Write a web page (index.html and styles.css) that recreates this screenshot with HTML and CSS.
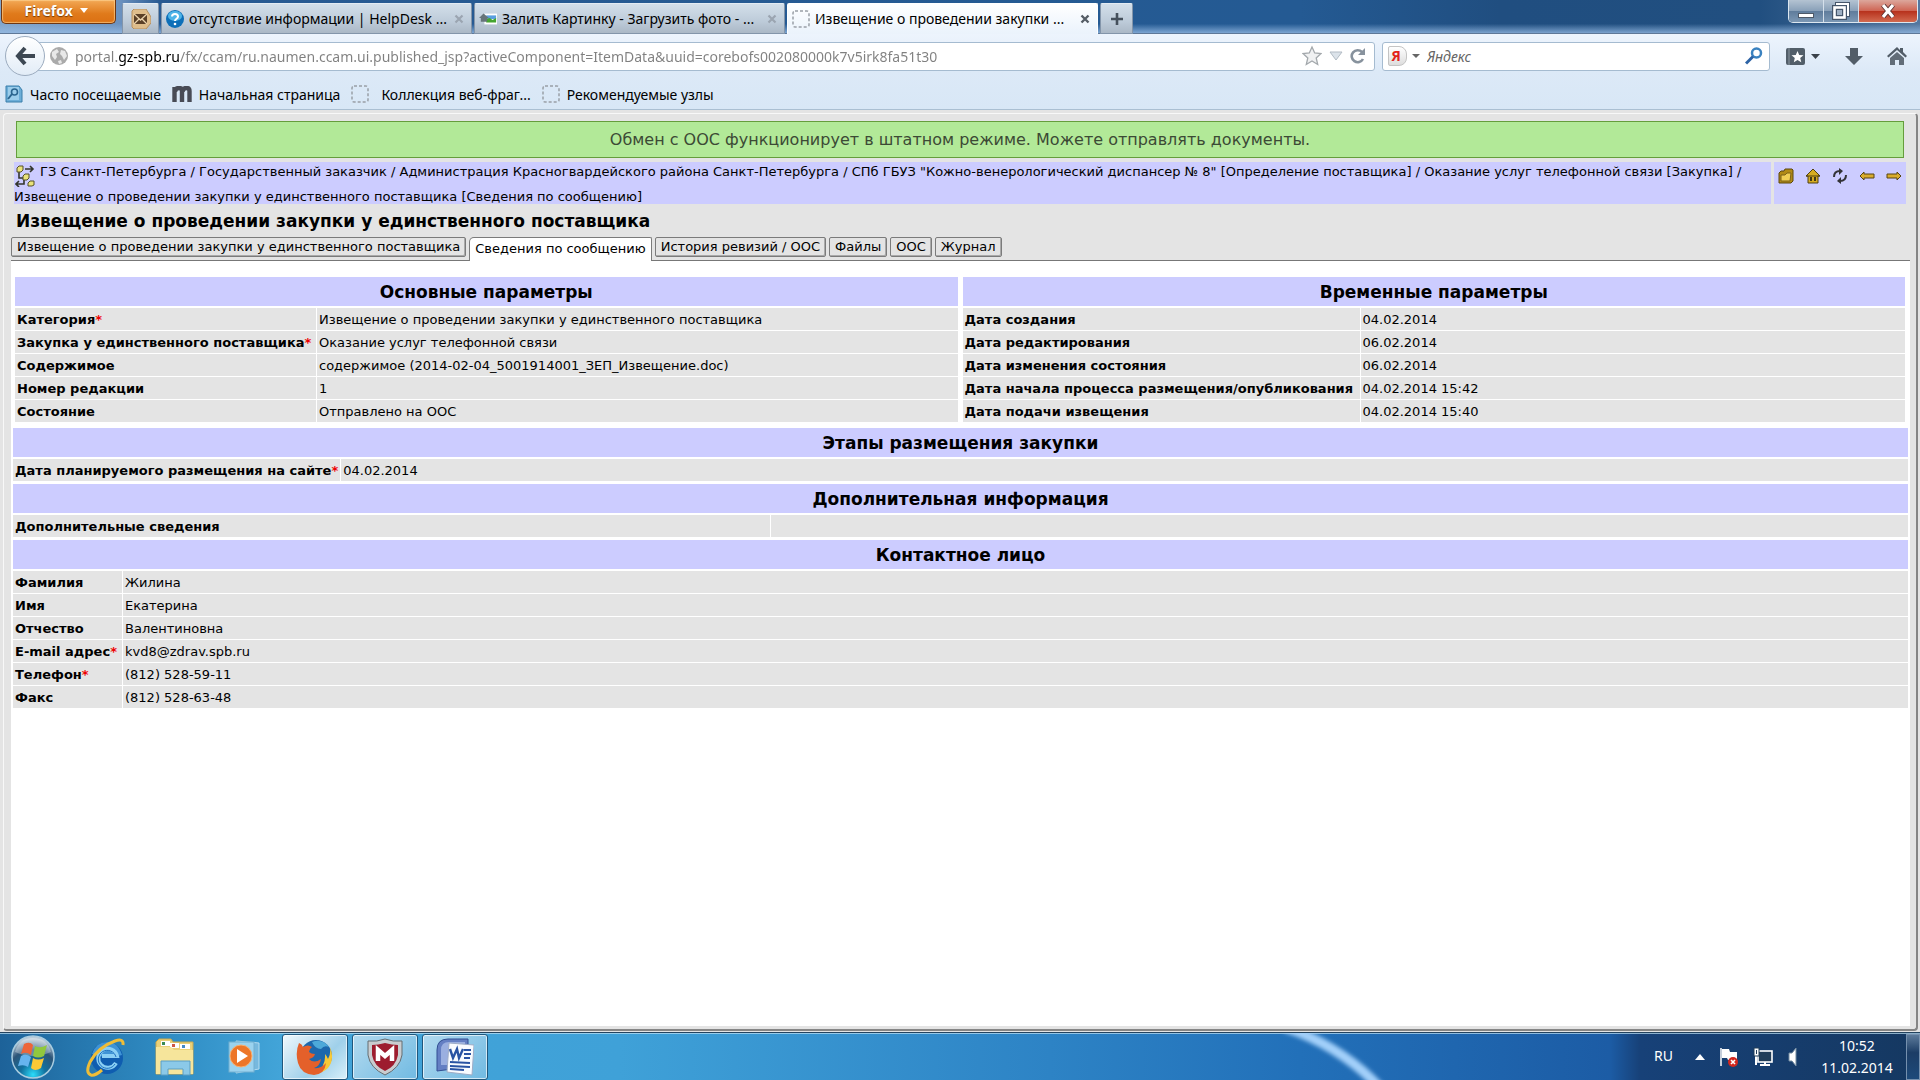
FILE: index.html
```html
<!DOCTYPE html>
<html lang="ru">
  <head>
    <meta charset="UTF-8" />
    <meta name="viewport" content="width=device-width, initial-scale=1.0" />
    <title>Извещение о проведении закупки у единственного поставщика</title>
    <link rel="stylesheet" href="styles.css">
  </head>
  <body>
    <!-- Заголовок окна и вкладки -->
    <header class="titlebar">
      <button class="firefox-btn">Firefox <span class="caret"></span></button>
      <div class="browser-tabs">
        <button class="browser-tab pinned" aria-label="Почта">
          <svg width="20" height="20" viewBox="0 0 20 20"><path d="M1 2l2-2h12l5 8v6l-5 6H3l-2-2z" fill="#dfbd8b" stroke="#b58f60"/><rect x="3" y="5" width="13" height="10" fill="#5b4027"/><path d="M3 5l6.500 6L16 5M3 15l5-5M16 15l-5-5" fill="none" stroke="#ead2ac" stroke-width="1.300"/></svg>
        </button>
        <div class="browser-tab">
          <svg width="18" height="18" viewBox="0 0 18 18"><circle cx="9" cy="9" r="9" fill="#0d6fb8"/><ellipse cx="9" cy="6" rx="7" ry="5" fill="#4db4e8"/><path d="M6 6.500C6 3 12 3 12 6.500 12 9 9 8.500 9 11" fill="none" stroke="#fff" stroke-width="2"/><circle cx="9" cy="14" r="1.300" fill="#fff"/></svg>
          <span class="tab-title">отсутствие информации | HelpDesk ...</span>
          <button class="tab-close" aria-label="Закрыть"><svg width="10" height="10" viewBox="0 0 10 10"><path d="M1.500 1.500l7 7M8.500 1.500l-7 7" stroke="#9ba5b1" stroke-width="2.200"/></svg></button>
        </div>
        <div class="browser-tab">
          <svg width="18" height="18" viewBox="0 0 20 18"><rect x="6" y="3" width="14" height="12" fill="#fff"/><rect x="8" y="5" width="11" height="4" fill="#5a9fe0"/><path d="M8 13V9l4-1 3 2 4-2v5z" fill="#45a52f"/><path d="M0 8l5-5 6 5H9v4H2V8z" fill="#667479"/></svg>
          <span class="tab-title">Залить Картинку - Загрузить фото - ...</span>
          <button class="tab-close" aria-label="Закрыть"><svg width="10" height="10" viewBox="0 0 10 10"><path d="M1.500 1.500l7 7M8.500 1.500l-7 7" stroke="#9ba5b1" stroke-width="2.200"/></svg></button>
        </div>
        <div class="browser-tab active">
          <svg width="18" height="18" viewBox="0 0 18 18"><rect x="1" y="1" width="16" height="16" rx="2" fill="none" stroke="#999fa6" stroke-width="1.500" stroke-dasharray="3 2"/></svg>
          <span class="tab-title">Извещение о проведении закупки ...</span>
          <button class="tab-close" aria-label="Закрыть"><svg width="10" height="10" viewBox="0 0 10 10"><path d="M1.500 1.500l7 7M8.500 1.500l-7 7" stroke="#555d66" stroke-width="2.400"/></svg></button>
        </div>
        <button class="browser-tab new-tab" aria-label="Новая вкладка">
          <svg width="14" height="14" viewBox="0 0 14 14"><path d="M7 1v12M1 7h12" stroke="#45505c" stroke-width="2.600"/></svg>
        </button>
      </div>
      <div class="window-buttons">
        <button class="win-btn" aria-label="Свернуть"><svg width="16" height="16" viewBox="0 0 16 16"><rect x="0.500" y="10.500" width="15" height="4" fill="#fff" stroke="#4d5968"/></svg></button>
        <button class="win-btn" aria-label="Развернуть"><svg width="18" height="18" viewBox="0 0 18 18"><rect x="5" y="2" width="11" height="11" fill="none" stroke="#46566a" stroke-width="4"/><rect x="5" y="2" width="11" height="11" fill="none" stroke="#fff" stroke-width="2"/><rect x="2.500" y="5.500" width="10" height="10" fill="#9eafc2" stroke="#46566a" stroke-width="5"/><rect x="2.500" y="5.500" width="10" height="10" fill="none" stroke="#fff" stroke-width="2.600"/></svg></button>
        <button class="win-btn win-close" aria-label="Закрыть окно"><svg width="16" height="14" viewBox="0 0 16 14"><path d="M3 1l10 12M13 1L3 13" stroke="#5e3433" stroke-width="5"/><path d="M3 1l10 12M13 1L3 13" stroke="#fff" stroke-width="3.200"/></svg></button>
      </div>
    </header>

    <!-- Панель навигации -->
    <nav class="navbar">
      <div class="nav-row">
        <button class="back-btn" aria-label="Назад">
          <svg width="20" height="20" viewBox="0 0 20 20"><path d="M10 2L3 10l7 8M3 10h17" fill="none" stroke="#3d4853" stroke-width="4"/></svg>
        </button>
        <div class="url-bar">
          <svg width="18" height="18" viewBox="0 0 18 18"><circle cx="9" cy="9" r="9" fill="#aaa"/><path d="M2 5l5-3 2 3-3 2 1 3-2 3-3-4zM11 3l4 1 2 5-3 4-2-4-2-2zM8 14l3-1 1 3-3 1z" fill="#e8e8e8"/></svg>
          <input type="text" class="url-input" aria-label="Адрес" value="portal.gz-spb.ru/fx/ccam/ru.naumen.ccam.ui.published_jsp?activeComponent=ItemData&amp;uuid=corebofs002080000k7v5irk8fa51t30" />
          <button class="icon-btn" aria-label="Добавить в закладки"><svg width="20" height="22" viewBox="0 0 20 20"><path d="M10 1l2.700 6 6.300.600-4.800 4.300 1.500 6.600L10 15l-5.700 3.500 1.500-6.600L1 7.600 7.300 7z" fill="#f0f1f2" stroke="#a3a8ac" stroke-width="1.300"/></svg></button>
          <button class="icon-btn" aria-label="История"><svg width="14" height="10" viewBox="0 0 14 10"><path d="M1 1h12L7 9z" fill="#dce3ea" stroke="#b2bbc4"/></svg></button>
          <button class="icon-btn" aria-label="Обновить"><svg width="16" height="16" viewBox="0 0 16 16"><path d="M13 11a6 6 0 1 1-1-7" fill="none" stroke="#87929d" stroke-width="2.600"/><path d="M15 0v7H8z" fill="#87929d"/></svg></button>
        </div>
        <div class="search-bar">
          <button class="icon-btn engine" aria-label="Поисковая система">
            <span class="ya-logo">Я</span>
            <svg width="8" height="5" viewBox="0 0 8 5"><path d="M0 0h8L4 4z" fill="#666"/></svg>
          </button>
          <input type="text" class="search-input" placeholder="Яндекс" aria-label="Яндекс" />
          <button class="icon-btn" aria-label="Поиск"><svg width="18" height="18" viewBox="0 0 18 18"><circle cx="11.500" cy="6" r="4.500" fill="none" stroke="#3a82c0" stroke-width="2.500"/><path d="M8 9.500l-7 7" stroke="#2d63a5" stroke-width="3"/></svg></button>
        </div>
        <div class="nav-tools">
          <button class="icon-btn" aria-label="Закладки"><svg width="36" height="20" viewBox="0 0 36 20"><rect x="1" y="2" width="19" height="17" rx="2" fill="#525e69"/><path d="M4 2v17" stroke="#8b97a2"/><path d="M12.500 5l1.700 4 4.300.300-3.300 2.700 1.100 4.300-3.800-2.400-3.700 2.400 1-4.300L6.500 9.300l4.300-.300z" fill="#fff"/><path d="M26 8h9l-4.500 5z" fill="#3a424a"/></svg></button>
          <button class="icon-btn" aria-label="Загрузки"><svg width="18" height="18" viewBox="0 0 18 18"><path d="M5 1h8v8h5l-9 9-9-9h5z" fill="#525d68"/></svg></button>
          <button class="icon-btn" aria-label="Домой"><svg width="20" height="18" viewBox="0 0 20 18"><path d="M0 9l10-9 3 3V1h3v4l4 4-1.500 1.500L10 3l-8.500 7.500z" fill="#525d68"/><path d="M3 11l7-6 7 6v7h-5v-5H8v5H3z" fill="#626d78"/></svg></button>
        </div>
      </div>
      <div class="bookmarks">
        <a href="#" class="bookmark"><svg width="18" height="18" viewBox="0 0 18 18"><path d="M1 1h13l3 4v12H1z" fill="#6caed8" stroke="#3a7eaa"/><rect x="3" y="2" width="11" height="13" fill="#9bcdeb"/><circle cx="9.500" cy="7" r="3" fill="none" stroke="#2b658f" stroke-width="1.600"/><path d="M7 9l-4 5" stroke="#2b658f" stroke-width="2"/></svg>Часто посещаемые</a>
        <a href="#" class="bookmark"><svg width="20" height="16" viewBox="0 0 20 16"><path d="M2.500 16V1M10 16V5q0-3-3-3-4 0-4 4M17.500 16V5q0-3-3-3-4 0-4 4" fill="none" stroke="#484b55" stroke-width="4.400"/></svg>Начальная страница</a>
        <a href="#" class="bookmark spaced"><svg width="18" height="18" viewBox="0 0 18 18"><rect x="1" y="1" width="16" height="16" rx="2" fill="none" stroke="#999fa6" stroke-width="1.500" stroke-dasharray="3 2"/></svg>Коллекция веб-фраг...</a>
        <a href="#" class="bookmark"><svg width="18" height="18" viewBox="0 0 18 18"><rect x="1" y="1" width="16" height="16" rx="2" fill="none" stroke="#999fa6" stroke-width="1.500" stroke-dasharray="3 2"/></svg>Рекомендуемые узлы</a>
      </div>
    </nav>

    <!-- Страница портала -->
    <main class="page">
      <div class="notice">Обмен с ООС функционирует в штатном режиме. Можете отправлять документы.</div>

      <div class="path-row">
        <div class="path">
          <svg width="20" height="23" viewBox="0 0 20 23"><path d="M10 5h8M15 2l3 3-3 3M4 8v6h4M9 15v5H1M4 17l-3 3 3 3" fill="none" stroke="#33352d" stroke-width="1.600"/><g fill="#e9e27a" stroke="#54512a"><path d="M2 4l2-2h4v4L6 8H2zM8 12l2-2h4v4l-2 2H8zM13 19l2-2h4v4l-2 1h-4z"/></g></svg>
          <a href="#">ГЗ Санкт-Петербурга</a> / <a href="#">Государственный заказчик</a> / <a href="#">Администрация Красногвардейского района Санкт-Петербурга</a> / <a href="#">СПб ГБУЗ "Кожно-венерологический диспансер № 8" [Определение поставщика]</a> / <a href="#">Оказание услуг телефонной связи [Закупка]</a> / <br><a href="#">Извещение о проведении закупки у единственного поставщика [Сведения по сообщению]</a>
        </div>
        <div class="path-tools">
          <a href="#" aria-label="Папка"><svg width="16" height="16" viewBox="0 0 16 16"><path d="M1 5l2-2h3l1-2h7l1 1v11l-2 2H1z" fill="#b18a16" stroke="#5d480d"/><path d="M3 7h4l2-2h4l-1 8H3z" fill="#f0cf55" stroke="#7d6218"/></svg></a>
          <a href="#" aria-label="Домой"><svg width="16" height="16" viewBox="0 0 16 16"><path d="M1 8l7-7 7 7h-2v7H3V8z" fill="#d6ac22" stroke="#514110"/><path d="M5 9h2v4H5zM9 9h2v4H9z" fill="#453a14"/><path d="M1 8h14" stroke="#514110"/></svg></a>
          <a href="#" aria-label="Обновить"><svg width="16" height="16" viewBox="0 0 16 16"><path d="M2 9q0-6 6-6M14 7q0 6-6 6" fill="none" stroke="#333337" stroke-width="2"/><path d="M7 0l4 3-4 4zM9 9l-4 4 4 3z" fill="#333337"/></svg></a>
          <a href="#" aria-label="Назад"><svg width="16" height="16" viewBox="0 0 16 16"><path d="M1 8l4-4v2h10v4H5v2z" fill="#d9ac2c" stroke="#584510"/></svg></a>
          <a href="#" aria-label="Вперёд"><svg width="16" height="16" viewBox="0 0 16 16"><path d="M15 8l-4-4v2H1v4h10v2z" fill="#d9ac2c" stroke="#584510"/></svg></a>
        </div>
      </div>

      <h1>Извещение о проведении закупки у единственного поставщика</h1>

      <div class="tabs">
        <button class="tab">Извещение о проведении закупки у единственного поставщика</button>
        <button class="tab active">Сведения по сообщению</button>
        <button class="tab">История ревизий / ООС</button>
        <button class="tab">Файлы</button>
        <button class="tab">ООС</button>
        <button class="tab">Журнал</button>
      </div>

      <div class="content">
        <div class="columns">
          <table class="params main-params">
            <caption>Основные параметры</caption>
            <tr><th>Категория<span class="req">*</span></th><td>Извещение о проведении закупки у единственного поставщика</td></tr>
            <tr><th>Закупка у единственного поставщика<span class="req">*</span></th><td>Оказание услуг телефонной связи</td></tr>
            <tr><th>Содержимое</th><td>содержимое (2014-02-04_5001914001_ЗЕП_Извещение.doc)</td></tr>
            <tr><th>Номер редакции</th><td>1</td></tr>
            <tr><th>Состояние</th><td>Отправлено на ООС</td></tr>
          </table>
          <table class="params time-params">
            <caption>Временные параметры</caption>
            <tr><th>Дата создания</th><td>04.02.2014</td></tr>
            <tr><th>Дата редактирования</th><td>06.02.2014</td></tr>
            <tr><th>Дата изменения состояния</th><td>06.02.2014</td></tr>
            <tr><th>Дата начала процесса размещения/опубликования</th><td>04.02.2014 15:42</td></tr>
            <tr><th>Дата подачи извещения</th><td>04.02.2014 15:40</td></tr>
          </table>
        </div>
        <table class="params stages">
          <caption>Этапы размещения закупки</caption>
          <tr><th>Дата планируемого размещения на сайте<span class="req">*</span></th><td>04.02.2014</td></tr>
        </table>
        <table class="params extra">
          <caption>Дополнительная информация</caption>
          <tr><th>Дополнительные сведения</th><td></td></tr>
        </table>
        <table class="params contact">
          <caption>Контактное лицо</caption>
          <tr><th>Фамилия</th><td>Жилина</td></tr>
          <tr><th>Имя</th><td>Екатерина</td></tr>
          <tr><th>Отчество</th><td>Валентиновна</td></tr>
          <tr><th>E-mail адрес<span class="req">*</span></th><td>kvd8@zdrav.spb.ru</td></tr>
          <tr><th>Телефон<span class="req">*</span></th><td>(812) 528-59-11</td></tr>
          <tr><th>Факс</th><td>(812) 528-63-48</td></tr>
        </table>
      </div>
    </main>

    <!-- Панель задач -->
    <footer class="taskbar">
      <svg class="taskbar-glow" viewBox="0 0 640 48" preserveAspectRatio="none">
        <defs><filter id="soft" x="-20%" y="-20%" width="140%" height="140%"><feGaussianBlur stdDeviation="2"/></filter></defs>
        <path d="M5 -6Q62 14 100 56" fill="none" stroke="#a3d0fa" stroke-width="10" filter="url(#soft)"/>
      </svg>
      <button class="start" aria-label="Пуск">
        <svg width="44" height="44" viewBox="0 0 44 44">
          <defs>
            <radialGradient id="orb" cx="50%" cy="92%" r="85%"><stop offset="0" stop-color="#2bdcfa"/><stop offset=".35" stop-color="#12719f"/><stop offset=".7" stop-color="#2d5578"/><stop offset="1" stop-color="#b9cbd9"/></radialGradient>
          </defs>
          <circle cx="22" cy="22" r="21" fill="url(#orb)" stroke="#a9ccdf" stroke-width="1.500"/>
          <path d="M4 17Q8 3 22 3t18 14Q22 25 4 17z" fill="#fff" opacity=".3"/>
          <path d="M13 9q6-3 9 1l-2 10q-5-4-10-1z" fill="#ee6538"/><path d="M24 11q5 3 12-1l-3 11q-6 3-11 0z" fill="#91c83e"/>
          <path d="M10 21q5-3 10 1l-3 10q-4-3-10-1z" fill="#66b4ee"/><path d="M22 23q5 3 11 0l-3 10q-6 4-10 0z" fill="#fbc936"/>
        </svg>
      </button>
      <button class="task-btn" aria-label="Internet Explorer">
        <svg width="42" height="42" viewBox="0 0 42 42"><circle cx="23" cy="22" r="16" fill="#0f5db0"/><path d="M8 18Q12 6 23 6t15 13q-14 5-30-1z" fill="#3f94d6"/><path d="M32 27a9.500 9.500 0 1 1 1-7H18" fill="none" stroke="#8bd0f5" stroke-width="4"/><path d="M31 28a9 9 0 1 1 1-7" fill="none" stroke="#1c6fbe" stroke-width="1"/><path d="M39 9Q40 2 31 5 14 11 6 26 1 37 7 39q4 1 11-5" fill="none" stroke="#efbd37" stroke-width="3"/></svg>
      </button>
      <button class="task-btn" aria-label="Проводник">
        <svg width="40" height="40" viewBox="0 0 40 40"><path d="M1 5l3-3h12l2 3h20v32H1z" fill="#ead17a" stroke="#c9a94f"/><path d="M6 4h9v5H6zM15 6h9v5h-9zM25 7h10v5H25z" fill="#fff"/><path d="M7 5h3v3H7z" fill="#3a8b55"/><path d="M17 7h3v3h-3z" fill="#d05741"/><path d="M27 8h3v3h-3z" fill="#4489c8"/><path d="M1 10h15l3 3h19v24H1z" fill="#f6e59b"/><path d="M6 38V24h29v14h-7v-6H13v6z" fill="#8bc9e8" stroke="#5a9ec3"/></svg>
      </button>
      <button class="task-btn" aria-label="Проигрыватель">
        <svg width="34" height="36" viewBox="0 0 34 36"><path d="M8 2l23 2v26l-23 4z" fill="#77b9de" stroke="#b5dcf0"/><rect x="1" y="3" width="25" height="30" fill="#9bd3ef" stroke="#72afd0"/><circle cx="13" cy="17" r="11" fill="#ed7628" stroke="#f7b173"/><path d="M9 10l11 7-11 7z" fill="#fff"/></svg>
      </button>
      <button class="task-btn open current" aria-label="Firefox">
        <svg width="38" height="38" viewBox="0 0 38 38"><circle cx="20" cy="18" r="16" fill="#1d68ad"/><path d="M16 4q10-4 17 5-5-2-8 2-6 0-9-7z" fill="#4da9d9"/><path d="M34 9q5 12-2 21-5 5-12 5 10-7 9-19 2 2 3 5 3-5 2-12z" fill="#f9c937"/><path d="M3 5q3 1 4 4 5-3 9 0-3 2-3 5 2 2 6 2-1 4-6 5 5 5 12 0-1 7-7 9 7 1 12-5-1 11-12 12Q5 36 2 25-1 14 3 5z" fill="#e4602a"/></svg>
      </button>
      <button class="task-btn open" aria-label="McAfee">
        <svg width="38" height="38" viewBox="0 0 38 38"><path d="M19 1q8 3 17 2v14Q34 30 19 37 4 30 2 17V3q9 1 17-2z" fill="#c9cdd0" stroke="#656c70"/><path d="M19 5q7 2 13 2v10q-2 11-13 16Q8 28 6 17V7q6 0 13-2z" fill="#9d1c2e"/><path d="M12 23V12l7 6 7-6v11" fill="none" stroke="#fff" stroke-width="4.500"/></svg>
      </button>
      <button class="task-btn open" aria-label="Word">
        <svg width="38" height="38" viewBox="0 0 38 38"><path d="M1 12Q1 1 12 1h20v28l-31 4z" fill="#647fc3" stroke="#324f93"/><path d="M5 12Q5 4 13 4h16v23H5z" fill="#9aafe0"/><path d="M13 5l25 2-2 30-25-3z" fill="#f8fbff" stroke="#9eacc6"/><path d="M14 11l3 9 4-9 2 9 4-9" fill="none" stroke="#2953a3" stroke-width="2.400"/><path d="M28 12h7M28 16h7M28 20h6M14 24l20 1M14 28l20 1M14 31l14 1" stroke="#2953a3" stroke-width="2"/></svg>
      </button>
      <div class="tray">
        <button class="lang">RU</button>
        <button class="tray-btn" aria-label="Скрытые значки"><svg width="10" height="6" viewBox="0 0 10 6"><path d="M0 6l5-6 5 6z" fill="#fff"/></svg></button>
        <button class="tray-btn" aria-label="Центр поддержки"><svg width="20" height="20" viewBox="0 0 20 20"><path d="M2 1v18" stroke="#fff" stroke-width="1.500"/><path d="M3 2h7l1 3h7v8H9l-1-2H3z" fill="#fff"/><circle cx="14" cy="15" r="5" fill="#d3281f"/><path d="M12 13l4 4M16 13l-4 4" stroke="#fff" stroke-width="1.600"/></svg></button>
        <button class="tray-btn" aria-label="Сеть"><svg width="20" height="20" viewBox="0 0 20 20"><rect x="5" y="4" width="14" height="11" fill="#223e59" stroke="#fff" stroke-width="1.600"/><path d="M7 18h10M12 15v3M3 8v10" stroke="#fff" stroke-width="2"/><rect x="1" y="1" width="5" height="8" fill="#fff" stroke="#223e59"/><path d="M3.500 3v4" stroke="#223e59"/></svg></button>
        <button class="tray-btn" aria-label="Громкость"><svg width="12" height="20" viewBox="0 0 12 20"><path d="M2 6h3l4-5v18l-4-5H2z" fill="#fff" stroke="#71899f"/></svg></button>
        <div class="clock"><span>10:52</span><span>11.02.2014</span></div>
        <button class="show-desktop" aria-label="Свернуть все окна"></button>
      </div>
    </footer>
  </body>
</html>
```

FILE: styles.css
```css
* {
  box-sizing: border-box;
}

body {
  margin: 0;
  min-height: 100vh;
  display: flex;
  flex-direction: column;
  background-color: #e4e4e4;
  color: #000;
  font-family: "DejaVu Sans", Verdana, sans-serif;
  font-size: 13px;
}

button,
input {
  font-family: inherit;
  font-size: inherit;
  color: inherit;
  margin: 0;
}

button {
  cursor: pointer;
}

a {
  color: inherit;
  text-decoration: none;
}

svg {
  display: block;
  flex: none;
}

/* окно браузера */
.titlebar,
.navbar {
  font-family: "Noto Sans", "Segoe UI", sans-serif;
  font-size: 14px;
}

.titlebar {
  height: 34px;
  display: flex;
  align-items: flex-start;
  padding: 0 2px 0 1px;
  background: linear-gradient(to bottom, transparent 70%, rgba(150, 187, 228, 0.8) 98%, #5e7898 98%),
    linear-gradient(to right, #83a6cc 0, #6c92bf 120px, #285a92 160px, #245a93 1300px, #204e80 1500px, #214f80 1760px, #54779f 100%);
}

.firefox-btn {
  width: 115px;
  height: 24px;
  padding: 0 4px 1px 0;
  border: 1px solid #6f3611;
  border-top: 0;
  border-radius: 0 0 5px 5px;
  background: linear-gradient(#f3a956, #e07a1b 60%, #db7013);
  box-shadow: inset 0 0 1px 1px rgba(255, 220, 160, 0.6);
  color: #fff;
  font-weight: bold;
  line-height: 22px;
  text-shadow: 0 1px 1px #723907;
}

.caret {
  display: inline-block;
  margin-left: 4px;
  vertical-align: 3px;
  border: 4px solid transparent;
  border-top: 5px solid #fff;
  border-bottom: 0;
}

.browser-tabs {
  display: flex;
  gap: 2px;
  flex: 1;
  padding: 3px 0 0 6px;
}

.browser-tab {
  display: flex;
  align-items: center;
  gap: 5px;
  width: 311px;
  height: 31px;
  padding: 0 7px 0 4px;
  border: 1px solid #8395aa;
  border-top-color: #e3ebf3;
  border-radius: 2px 2px 0 0;
  background: linear-gradient(#d3dfea, #bdcbd9 60%, #abb8c6);
}

.browser-tab.pinned {
  width: 37px;
  padding: 0 8px;
}

.browser-tab.active {
  background: linear-gradient(#fff, #ebf3fc);
  border-color: #fff;
  border-bottom-color: #ebf3fc;
}

.browser-tab.new-tab {
  width: 33px;
  padding: 0;
  justify-content: center;
}

.tab-title {
  flex: 1;
  white-space: nowrap;
}

.tab-close,
.icon-btn {
  display: flex;
  align-items: center;
  padding: 0;
  border: 0;
  background: none;
}

.window-buttons {
  display: flex;
  border: 1px solid #dce7f0;
  border-top: 0;
  border-radius: 0 0 5px 5px;
  overflow: hidden;
}

.win-btn {
  display: flex;
  align-items: center;
  justify-content: center;
  width: 35px;
  height: 22px;
  padding: 0;
  border: 0;
  border-right: 1px solid #d5e0eb;
  background: linear-gradient(#b4c3d2, #8aa1b9 48%, #5f7c9b 50%, #7b97b4);
}

.win-close {
  width: 58px;
  border-right: 0;
  background: linear-gradient(#dca79c, #cf6655 48%, #b7301b 50%, #d26a50);
}

.navbar {
  padding: 2px 0 0;
  background: linear-gradient(#edf4fd, #dce9f7 50%, #d8e7f6);
  border-bottom: 1px solid #aabfd2;
}

.nav-row {
  display: flex;
  align-items: center;
  padding: 0 13px 0 5px;
}

.back-btn {
  position: relative;
  display: flex;
  align-items: center;
  justify-content: center;
  width: 40px;
  height: 40px;
  padding: 0;
  border: 1px solid #9cacbf;
  border-radius: 50%;
  background: linear-gradient(#fff, #e2ecf7);
}

.url-bar,
.search-bar {
  display: flex;
  align-items: center;
  height: 29px;
  background-color: #fff;
  border: 1px solid #a5bbd0;
  border-radius: 3px;
}

.url-bar {
  flex: 1;
  gap: 7px;
  margin-left: -10px;
  padding: 0 8px 0 14px;
}

/* домен в адресе темнее остального текста */
.url-input {
  flex: 1;
  min-width: 0;
  padding: 0;
  border: 0;
  background: linear-gradient(to right, #808080 43px, #000 43px, #000 105px, #808080 105px);
  background-clip: text;
  -webkit-background-clip: text;
  color: transparent;
}

.search-bar {
  width: 388px;
  margin-left: 7px;
  padding: 0 6px 0 5px;
}

.search-input {
  flex: 1;
  min-width: 0;
  padding: 0 7px;
  border: 0;
  background: none;
}

.search-input::placeholder {
  color: #666;
  font-style: italic;
}

.engine {
  gap: 5px;
}

.ya-logo {
  width: 19px;
  height: 20px;
  padding-right: 3px;
  border: 1px solid #c4c4c4;
  border-radius: 2px 8px 8px 2px;
  background: linear-gradient(#fff, #ddd);
  color: #e2231a;
  font-weight: bold;
  line-height: 18px;
}

.nav-tools {
  display: flex;
  align-items: center;
  gap: 24px;
  padding-left: 15px;
}

.bookmarks {
  display: flex;
  align-items: center;
  gap: 11px;
  height: 33px;
  padding: 3px 5px 0;
}

.bookmark {
  display: flex;
  align-items: center;
  gap: 7px;
}

.bookmark.spaced {
  gap: 12px;
}

/* страница */
.page {
  flex: 1;
  display: flex;
  flex-direction: column;
  margin: 3px 2px 1px 3px;
  padding: 7px 6px 3px 7px;
  border: 1px solid #f8f8f8;
  border-right: 2px solid #858585;
  border-bottom: 2px solid #858585;
  border-radius: 4px;
}

.notice {
  margin: 0 6px 0 5px;
  padding-top: 1px;
  border: 1px solid #659d3c;
  background-color: #b2e998;
  color: #3c4a35;
  font-size: 16px;
  line-height: 34px;
  text-align: center;
}

.path-row {
  display: flex;
  gap: 3px;
  margin: 4px 4px 0 3px;
}

.path,
.path-tools {
  height: 42px;
  background-color: #ccf;
}

.path {
  flex: 1;
  line-height: 19px;
}

.path svg {
  float: left;
  margin: 2px 5px 0 1px;
}

.path br {
  clear: left;
}

.path-tools {
  display: flex;
  justify-content: space-between;
  width: 132px;
  padding: 6px 4px;
}

h1 {
  margin: 7px 5px 5px;
  font-size: 17px;
  line-height: 20px;
}

.tabs {
  display: flex;
  align-items: flex-end;
  gap: 3px;
  height: 25px;
  border-bottom: 1px solid #777;
}

.tab {
  height: 20px;
  margin-bottom: 3px;
  padding: 0 5px;
  border: 1px solid #7b7b7b;
  border-radius: 2px;
  background-color: #e4e4e4;
  box-shadow: inset -1px -1px #aaa;
  line-height: 18px;
  white-space: nowrap;
}

.tab.active {
  height: 24px;
  margin-bottom: -1px;
  padding-bottom: 2px;
  border-bottom: 0;
  border-radius: 5px 2px 0 0;
  background-color: #fff;
  box-shadow: none;
}

.content {
  flex: 1;
  padding: 16px 2px 0;
  background-color: #fff;
}

.columns {
  display: flex;
  gap: 5px;
  margin: 0 3px 5px 2px;
}

.columns .params {
  flex: 1;
  margin: 0;
}

.params {
  width: 100%;
  margin-bottom: 2px;
  border-spacing: 0;
}

.params caption {
  padding-top: 1px;
  border-bottom: 2px solid #fff;
  background-color: #ccf;
  font-size: 17px;
  font-weight: bold;
  line-height: 28px;
}

.params th,
.params td {
  height: 23px;
  padding: 2px 2px 0;
  background-color: #e4e4e4;
  border-bottom: 1px solid #fff;
  text-align: left;
  line-height: 16px;
  white-space: nowrap;
}

.params th {
  border-right: 1px solid #fff;
}

.main-params th {
  width: 302px;
}

.time-params th {
  width: 398px;
}

.stages th {
  width: 328px;
}

.extra th {
  width: 40%;
}

.contact th {
  width: 110px;
}

.req {
  color: #e00;
}

/* панель задач */
.taskbar {
  position: relative;
  display: flex;
  align-items: center;
  gap: 4px;
  height: 48px;
  padding-left: 11px;
  border-top: 1px solid #24435e;
  background: linear-gradient(to right, #1d6299 0, #2575ac 70px, #318fc6 180px, #42a4d8 280px, #3fa1d8 620px, #2d83c5 1050px, #2270b9 1300px, #1c5ca5 1610px, #174178 1640px, #153861 100%);
  box-shadow: inset 0 1px rgba(190, 225, 245, 0.7);
  color: #fff;
  font-family: "Noto Sans", "Segoe UI", sans-serif;
  font-size: 14px;
}

.taskbar-glow {
  position: absolute;
  top: 0;
  right: 0;
  width: 640px;
  height: 47px;
}

.start,
.task-btn,
.tray-btn,
.lang {
  padding: 0;
  border: 0;
  background: none;
}

.start {
  width: 57px;
}

.task-btn {
  display: flex;
  align-items: center;
  justify-content: center;
  width: 66px;
  height: 46px;
  border-radius: 3px;
}

.task-btn.open {
  border: 1px solid #20577c;
  background: linear-gradient(135deg, rgba(255, 255, 255, 0.6), rgba(255, 255, 255, 0.25));
  box-shadow: inset 0 0 0 1px rgba(255, 255, 255, 0.65);
}

.task-btn.current {
  background: linear-gradient(135deg, #f0f8fc, #9fd0ea 60%, #d9f0fa);
}

.tray {
  position: relative;
  display: flex;
  align-items: center;
  margin-left: auto;
  height: 100%;
}

.lang {
  padding-bottom: 3px;
  margin-right: 22px;
}

.tray-btn {
  margin-right: 14px;
}

.clock {
  display: flex;
  flex-direction: column;
  align-items: center;
  width: 88px;
  margin-right: 5px;
  line-height: 22px;
}

.show-desktop {
  width: 14px;
  height: 46px;
  padding: 0;
  border: 1px solid #7590ae;
  background: linear-gradient(#5d7b9b, #1c3d66 40%, #1d4a7a);
}
```
